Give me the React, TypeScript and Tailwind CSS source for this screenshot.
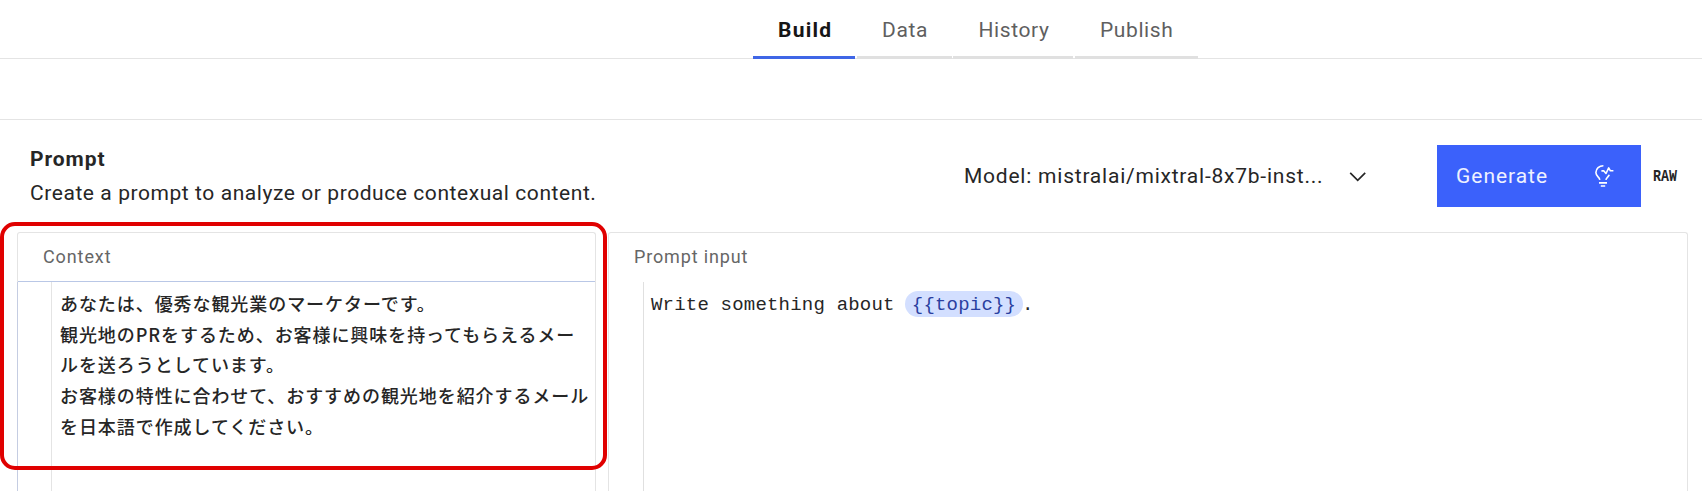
type Tab = { label: string; active?: boolean; className: string };

const tabs: Tab[] = [
  { label: "Build", active: true, className: "w-[102px] pl-[25px] font-bold tracking-[1.25px] text-[#161616]" },
  { label: "Data", className: "ml-[2px] w-[95px] pl-[25px] tracking-[0.64px] text-[#5f5f5f]" },
  { label: "History", className: "ml-px w-[120px] pl-[25.5px] tracking-[0.6px] text-[#5f5f5f]" },
  { label: "Publish", className: "ml-[2px] w-[123px] pl-[25px] tracking-[0.6px] text-[#5f5f5f]" },
];

const contextLines = [
  "あなたは、優秀な観光業のマーケターです。",
  "観光地のPRをするため、お客様に興味を持ってもらえるメー",
  "ルを送ろうとしています。",
  "お客様の特性に合わせて、おすすめの観光地を紹介するメール",
  "を日本語で作成してください。",
];

function ChevronDown() {
  return (
    <svg width="18" height="12" viewBox="0 0 18 12" fill="none" stroke="#262626" strokeWidth="1.7">
      <path d="M1.2 1.8 8.7 9.3l7.5-7.5" />
    </svg>
  );
}

function IdeaIcon() {
  return (
    <svg width="20" height="24" viewBox="0 0 20 24" fill="none" stroke="#ffffff" strokeWidth="1.6">
      <path d="M9.4 1.7C5.2 1.7 1.9 4.6 1.9 8.6c0 3.9 3.6 4.4 3.9 7.2" />
      <path d="M7.4 6.9h2.5l2.1 2.6 2.7-5.6 1.7 2.9h3" strokeLinejoin="round" />
      <path d="M15.2 10.8c-.5 2-2.9 2.7-3.3 5" />
      <path d="M5 18.8h8M6.8 22h4.4" strokeWidth="1.7" />
    </svg>
  );
}

export default function App() {
  return (
    <div className="relative flex h-[491px] w-full flex-col overflow-hidden bg-white font-[Roboto,sans-serif] text-[21px] text-[#262626]">
      <nav className="flex h-[59px] shrink-0 pl-[753px] shadow-[inset_0_-1px_0_#e4e4e4]">
        {tabs.map((tab) => (
          <button
            key={tab.label}
            className={`flex h-[59px] items-start border-b-[3px] pt-[16px] leading-[28px] whitespace-nowrap ${
              tab.active ? "border-[#3f66e6]" : "border-[#e0e0e0]"
            } ${tab.className}`}
          >
            {tab.label}
          </button>
        ))}
      </nav>
      <div className="h-[61px] shrink-0 border-b border-[#e4e4e4]" />

      <section className="flex h-[112px] shrink-0 pl-[29px]">
        <div className="w-[935px] pt-[25px] pl-px leading-[28px] whitespace-nowrap">
          <h2 className="font-bold tracking-[0.95px]">Prompt</h2>
          <p className="mt-[6px] tracking-[0.57px]">Create a prompt to analyze or produce contexual content.</p>
        </div>
        <div className="mt-[43px] flex h-[28px] w-[473px] items-center whitespace-nowrap">
          <span className="w-[385px] tracking-[0.77px]">Model: mistralai/mixtral-8x7b-inst...</span>
          <ChevronDown />
        </div>
        <button className="mt-[25px] flex h-[62px] w-[203.5px] items-center bg-[#3b61fb] pl-[19px] text-white">
          <span className="w-[138px] text-left leading-[28px] tracking-[0.97px] text-[#eef1ff]">Generate</span>
          <IdeaIcon />
        </button>
        <div className="ml-[12px] pt-[39px]">
          <span className="inline-block origin-left scale-x-[0.83] font-['Liberation_Mono',monospace] text-[16px] leading-[24px] font-bold">
            RAW
          </span>
        </div>
      </section>

      <main className="flex min-h-0 flex-1 pl-[17px]">
        <section className="flex w-[579px] flex-col rounded-t-[3px] border-x border-t border-[#e4e4e4]">
          <h3 className="h-[49px] shrink-0 border-b border-[#b9c7e6] pt-[12px] pl-[25px] text-[18px] leading-[24px] tracking-[0.9px] text-[#666666]">
            Context
          </h3>
          <div className="-ml-px flex flex-1 border-l border-[#c5cde2]">
            <div className="w-[34px] border-r border-[#e4e4e4]" />
            <div className="pt-[6px] pl-[8px] font-['Noto_Sans_CJK_JP',sans-serif] text-[18px] leading-[30.7px] font-medium tracking-[0.93px] whitespace-nowrap">
              {contextLines.map((line) => (
                <p key={line}>{line}</p>
              ))}
            </div>
          </div>
        </section>

        <section className="ml-[12px] flex w-[1080px] flex-col rounded-t-[3px] border-x border-t border-[#e4e4e4]">
          <h3 className="h-[49px] shrink-0 pt-[12px] pl-[25px] text-[18px] leading-[24px] tracking-[0.85px] text-[#666666]">
            Prompt input
          </h3>
          <div className="flex flex-1">
            <div className="w-[35px] border-r border-[#e0e0e0]" />
            <div className="mt-[9px] flex h-[26px] items-center pl-[7px] font-['Liberation_Mono',monospace] text-[19px] tracking-[0.2px] whitespace-pre">
              <span className="w-[254px] pt-[2px]">Write something about</span>
              <span className="flex h-[26px] w-[118px] items-center justify-center rounded-full bg-[#d3dfff] pt-[2px] text-[#2b3fa0]">
                {"{{topic}}"}
              </span>
              <span className="pt-[2px] -ml-px">.</span>
            </div>
          </div>
        </section>
      </main>

      <div className="pointer-events-none absolute top-[222px] left-0 h-[248px] w-[607px] rounded-[15px] border-4 border-[#e00000]" />
    </div>
  );
}
